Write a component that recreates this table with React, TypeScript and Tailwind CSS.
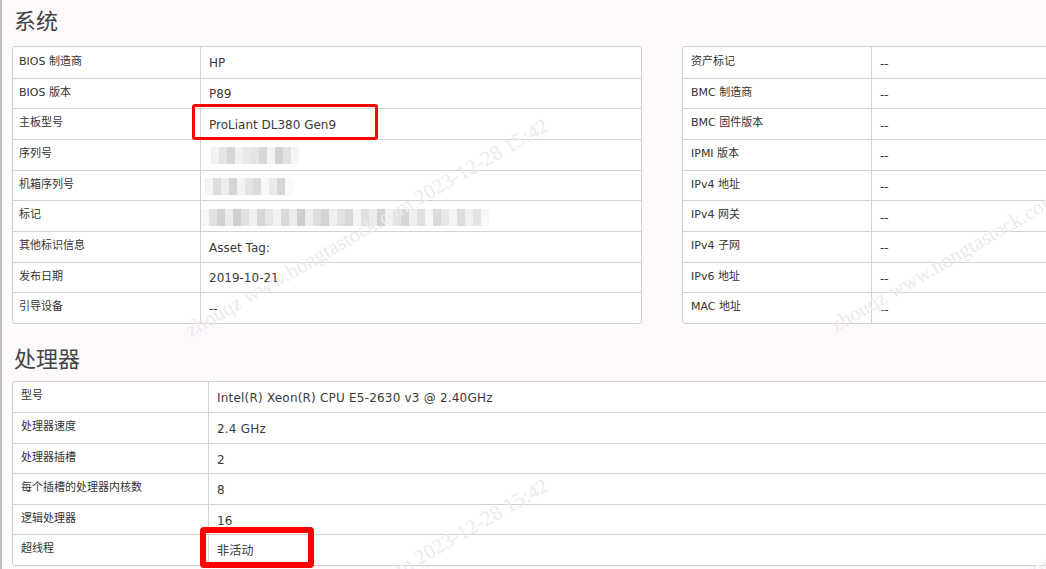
const sysLeft = [
  { label: 'BIOS 制造商', value: 'HP' },
  { label: 'BIOS 版本', value: 'P89' },
  { label: '主板型号', value: 'ProLiant DL380 Gen9' },
  { label: '序列号', blur: 'a' },
  { label: '机箱序列号', blur: 'b' },
  { label: '标记', blur: 'c' },
  { label: '其他标识信息', value: 'Asset Tag:' },
  { label: '发布日期', value: '2019-10-21' },
  { label: '引导设备', value: '--' },
];

const sysRight = [
  '资产标记',
  'BMC 制造商',
  'BMC 固件版本',
  'IPMI 版本',
  'IPv4 地址',
  'IPv4 网关',
  'IPv4 子网',
  'IPv6 地址',
  'MAC 地址',
];

const cpu = [
  { label: '型号', value: 'Intel(R) Xeon(R) CPU E5-2630 v3 @ 2.40GHz' },
  { label: '处理器速度', value: '2.4 GHz' },
  { label: '处理器插槽', value: '2' },
  { label: '每个插槽的处理器内核数', value: '8' },
  { label: '逻辑处理器', value: '16' },
  { label: '超线程', value: '非活动' },
];

// pixelated blur cells, 8px each
const blurs: Record<string, { offset: number; cells: string[] }> = {
  a: {
    offset: 10,
    cells: ['#f2f2f2', '#e4e4e4', '#d6d6d6', '#f0f0f0', '#e8e8e8', '#e4e4e4', '#d8d8d8', '#f4f4f4', '#d2d2d2', '#e2e2e2', '#f6f6f6'],
  },
  b: {
    offset: 4,
    cells: ['#f4f4f4', '#dcdcdc', '#ececec', '#d4d4d4', '#f2f2f2', '#e4e4e4', '#dadada', '#f8f8f8', '#eaeaea', '#d6d6d6', '#fafafa'],
  },
  c: {
    offset: 0,
    cells: [
      '#f6f6f6', '#e2e2e2', '#d2d2d2', '#ececec', '#d0d0d0', '#e0e0e0', '#f0f0f0', '#d6d6d6', '#e6e6e6', '#f2f2f2',
      '#d8d8d8', '#ececec', '#cecece', '#eeeeee', '#dedede', '#d4d4d4', '#f0f0f0', '#e2e2e2', '#d8d8d8', '#f4f4f4',
      '#e0e0e0', '#ececec', '#d2d2d2', '#f2f2f2', '#e4e4e4', '#d6d6d6', '#f0f0f0', '#e0e0e0', '#f6f6f6', '#dadada',
      '#e8e8e8', '#f4f4f4', '#dcdcdc', '#f0f0f0', '#e4e4e4', '#f8f8f8',
    ],
  },
};

const font = { fontFamily: '"DejaVu Sans", "Noto Sans CJK SC", sans-serif' };

function Blur({ kind }: { kind: string }) {
  const b = blurs[kind];
  return (
    <div className="flex h-[17px]" style={{ marginLeft: b.offset - 8 }}>
      {b.cells.map((c, i) => (
        <div key={i} className="h-full w-[8px]" style={{ backgroundColor: c }} />
      ))}
    </div>
  );
}

function Watermark({ left, top }: { left: number; top: number }) {
  return (
    <div
      className="absolute origin-top-left whitespace-nowrap text-[21px] text-[#eeeaee]"
      style={{ left, top, transform: 'rotate(-30deg)', fontFamily: '"Liberation Serif", serif' }}
    >
      zhouqz www.hongtastock.com 2023-12-28 15:42
    </div>
  );
}

export default function App() {
  return (
    <div className="relative h-[569px] w-[1046px] overflow-hidden border-l-2 border-[#bdbdbd] bg-[#fdf9fd] text-[#333]" style={font}>
      <div className="w-[1310px] pl-[10px]">
        <h2 className="pl-[2px] pt-[5px] text-[22px] leading-[28px] text-[#444]" style={{ fontFamily: '"Noto Sans CJK SC", sans-serif' }}>
          系统
        </h2>

        <div className="mt-[13px] flex gap-[40px]">
          <div className="w-[630px] overflow-hidden rounded-[3px] border border-[#cfcfcf] bg-white">
            {sysLeft.map((r, i) => (
              <div key={r.label} className={`flex h-[30.67px] ${i ? 'border-t border-[#d2d2d2]' : ''}`}>
                <div className="flex w-[188px] shrink-0 items-center border-r border-[#d2d2d2] pb-[1px] pl-[6px] text-[11px]">{r.label}</div>
                <div className="flex flex-1 items-center pl-[8px] pt-[2px] text-[12px] text-[#3a3a3a]">
                  {r.blur ? <Blur kind={r.blur} /> : r.value}
                </div>
              </div>
            ))}
          </div>

          <div className="w-[630px] overflow-hidden rounded-[3px] border border-[#cfcfcf] bg-white">
            {sysRight.map((label, i) => (
              <div key={label} className={`flex h-[30.67px] ${i ? 'border-t border-[#d2d2d2]' : ''}`}>
                <div className="flex w-[189px] shrink-0 items-center border-r border-[#d2d2d2] pb-[1px] pl-[8px] text-[11px]">{label}</div>
                <div className="flex flex-1 items-center pl-[8px] pt-[3px] text-[12px] text-[#3a3a3a]">--</div>
              </div>
            ))}
          </div>
        </div>

        <h2 className="pl-[2px] pt-[19px] text-[22px] leading-[28px] text-[#444]" style={{ fontFamily: '"Noto Sans CJK SC", sans-serif' }}>
          处理器
        </h2>

        <div className="mt-[10px] w-[1300px] overflow-hidden rounded-[3px] border border-[#cfcfcf] bg-white">
          {cpu.map((r, i) => (
            <div key={r.label} className={`flex h-[30.5px] ${i ? 'border-t border-[#d2d2d2]' : ''}`}>
              <div className="flex w-[196px] shrink-0 items-center border-r border-[#d2d2d2] pb-[1px] pl-[8px] text-[11px]">{r.label}</div>
              <div className="flex flex-1 items-center pl-[8px] pt-[2px] text-[12px] tracking-[0.2px] text-[#3a3a3a]">{r.value}</div>
            </div>
          ))}
        </div>
      </div>

      {/* highlight boxes */}
      <div className="pointer-events-none absolute left-[190px] top-[104px] h-[36px] w-[186px] rounded-[3px] border-[3px] border-[#ff0000]" />
      <div className="pointer-events-none absolute left-[198px] top-[527px] h-[41px] w-[114px] rounded-[4px] border-[6px] border-[#ff0000]" />

      <div className="pointer-events-none absolute inset-0">
        <Watermark left={178} top={318} />
        <Watermark left={823} top={313} />
        <Watermark left={178} top={678} />
        <Watermark left={823} top={673} />
      </div>
    </div>
  );
}
